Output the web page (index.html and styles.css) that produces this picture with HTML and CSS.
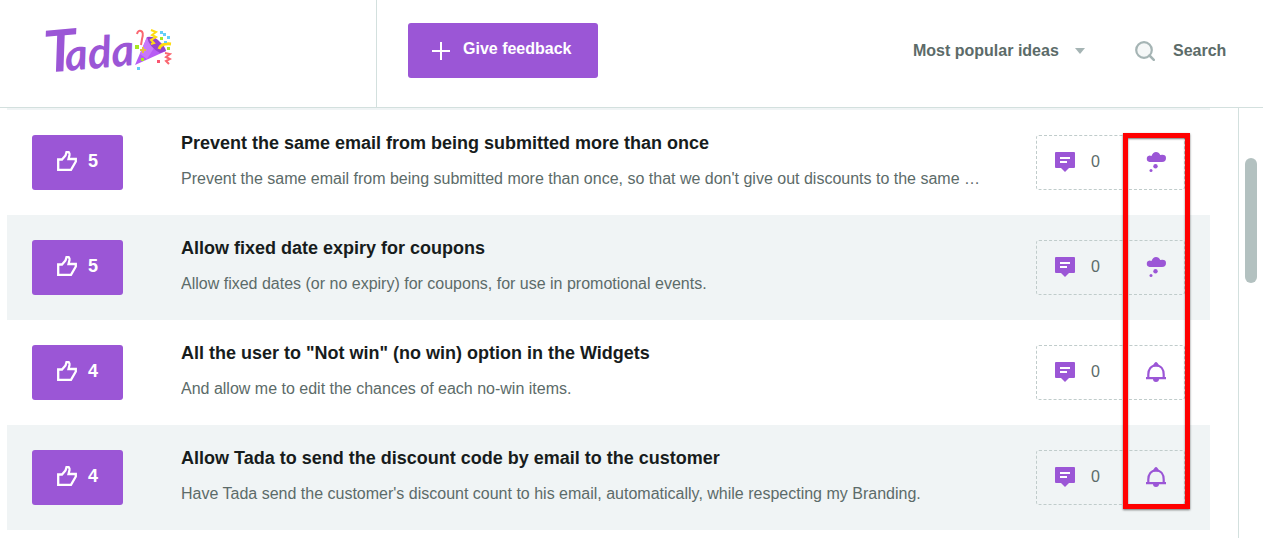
FILE: index.html
```html
<!DOCTYPE html>
<html lang="en">
  <head>
    <meta charset="UTF-8" />
    <meta name="viewport" content="width=device-width, initial-scale=1.0" />
    <title>Tada feedback</title>
    <link rel="stylesheet" href="styles.css">
  </head>
  <body>
    <!-- shared icons -->
    <svg class="sprite" aria-hidden="true">
      <symbol id="thumb" viewBox="0 0 20 20">
        <path d="M1.200 8.500H5L8.500 4.500 9.500 1.200h2.300q1 1 .7 2.800L11.500 8h7.300v2.500L14 18.800H1.200z" fill="none" stroke="currentColor" stroke-width="2.300" />
      </symbol>
      <symbol id="comment" viewBox="0 0 20 20">
        <path d="M1 0h18q1 0 1 1v14q0 1-1 1h-5l-4 4-4-4H1q-1 0-1-1V1q0-1 1-1z" fill="currentColor" />
        <path d="M5 6h10M5 10h7" stroke="#fff" stroke-width="2" />
      </symbol>
      <symbol id="cloud" viewBox="0 0 20 20">
        <path d="M3.500 10a3.300 3.300 0 0 1 0-6.500q1 0 2 .5Q7 0 10 0q3 0 4.200 3Q20 2 20 6q0 4-4 4z" fill="currentColor" />
        <circle cx="9.500" cy="14.300" r="2.200" fill="currentColor" />
        <circle cx="5" cy="18.500" r="1.500" fill="currentColor" />
      </symbol>
      <symbol id="bell" viewBox="0 0 20 20">
        <path d="M2.300 16v-3.500c0-5 2.500-9 7.700-9s7.700 4 7.700 9V16M0 16.200h20" fill="none" stroke="currentColor" stroke-width="2.200" />
        <path d="M6 4.500 8.500 1q1.500-2 3 0L14 4.500zM7 17h6q0 3-3 3t-3-3z" fill="currentColor" />
      </symbol>
    </svg>

    <header class="header">
      <a class="brand" href="#">
        <span class="brand-name">Tada</span>
        <svg class="popper" viewBox="0 0 38 42" aria-hidden="true">
          <path d="M13 8 1 36l31-14z" fill="#b75cf5" />
          <path d="m13 8-7 17 7 5 7-11z" fill="#c878fa" />
          <path d="M13 8q8-1 13 5 5 4 6 9l-6 2Q15 18 13 8z" fill="#9642ce" />
          <path d="M3 5q1-4 4-3t1 8l-1 6" fill="none" stroke="#fa6670" stroke-width="2" />
          <path d="m17 1 5 2-4 3 4 2-5 3 3 3-3 1" fill="none" stroke="#ffdc10" stroke-width="2" />
          <path d="M25 20q2-6 12-5" fill="none" stroke="#ffdc10" stroke-width="3" />
          <path d="m31 24 5 1-4 3 4 2-4 2 3 3" fill="none" stroke="#fa6670" stroke-width="2" />
          <path d="M1 16h4v4H1zM26 8h3v3h-3zM33 18h3v3h-3zM7 29h3v3H7z" fill="#a6e822" />
          <path d="M26 2h3v3h-3zM29 4h3v3h-3zM33 7h3v3h-3zM30 12h3v2h-3zM3 38h3v3H3z" fill="#62cef8" />
          <path d="M23 31h3v3h-3z" fill="#fa5570" />
          <path d="M9 18v6M6 21h6" stroke="#e4c040" stroke-width="2" />
        </svg>
      </a>
      <div class="toolbar">
        <button class="feedback" type="button">
          <svg width="18" height="18" viewBox="0 0 18 18" aria-hidden="true">
            <path d="M9 0v18M0 9h18" stroke="currentColor" stroke-width="2" />
          </svg>
          <span>Give feedback</span>
        </button>
        <div class="sort">
          <select class="sort-select" aria-label="Sort ideas">
            <option>Most popular ideas</option>
          </select>
          <svg width="10" height="6" viewBox="0 0 10 6" aria-hidden="true">
            <path d="M0 0h10L5 6z" fill="#a5b4b4" />
          </svg>
        </div>
        <div class="search">
          <label for="search" aria-label="Search">
            <svg width="20" height="20" viewBox="0 0 20 20" aria-hidden="true">
              <circle cx="9" cy="9" r="7.800" fill="#f5f7f7" stroke="#a5b4b4" stroke-width="2.200" />
              <path d="m14.500 14.500 4.300 4.300" stroke="#a5b4b4" stroke-width="2.500" stroke-linecap="round" />
            </svg>
          </label>
          <input id="search" class="search-input" type="text" placeholder="Search">
        </div>
      </div>
    </header>

    <main class="content">
      <div class="ideas">
        <article class="idea">
          <button class="vote" type="button"><svg class="icon"><use href="#thumb" /></svg>5</button>
          <div class="idea-text">
            <h2>Prevent the same email from being submitted more than once</h2>
            <p>Prevent the same email from being submitted more than once, so that we don't give out discounts to the same …</p>
          </div>
          <div class="stats">
            <a class="comments" href="#"><svg class="icon"><use href="#comment" /></svg>0</a>
            <span class="status"><svg class="icon"><use href="#cloud" /></svg></span>
          </div>
        </article>
        <article class="idea">
          <button class="vote" type="button"><svg class="icon"><use href="#thumb" /></svg>5</button>
          <div class="idea-text">
            <h2>Allow fixed date expiry for coupons</h2>
            <p>Allow fixed dates (or no expiry) for coupons, for use in promotional events.</p>
          </div>
          <div class="stats">
            <a class="comments" href="#"><svg class="icon"><use href="#comment" /></svg>0</a>
            <span class="status"><svg class="icon"><use href="#cloud" /></svg></span>
          </div>
        </article>
        <article class="idea">
          <button class="vote" type="button"><svg class="icon"><use href="#thumb" /></svg>4</button>
          <div class="idea-text">
            <h2>All the user to "Not win" (no win) option in the Widgets</h2>
            <p>And allow me to edit the chances of each no-win items.</p>
          </div>
          <div class="stats">
            <a class="comments" href="#"><svg class="icon"><use href="#comment" /></svg>0</a>
            <span class="status"><svg class="icon"><use href="#bell" /></svg></span>
          </div>
        </article>
        <article class="idea">
          <button class="vote" type="button"><svg class="icon"><use href="#thumb" /></svg>4</button>
          <div class="idea-text">
            <h2>Allow Tada to send the discount code by email to the customer</h2>
            <p>Have Tada send the customer's discount count to his email, automatically, while respecting my Branding.</p>
          </div>
          <div class="stats">
            <a class="comments" href="#"><svg class="icon"><use href="#comment" /></svg>0</a>
            <span class="status"><svg class="icon"><use href="#bell" /></svg></span>
          </div>
        </article>
        <div class="highlight"></div>
      </div>
      <div class="scroll-track"><div class="scroll-thumb"></div></div>
    </main>
  </body>
</html>
```
FILE: styles.css
```css
* {
  box-sizing: border-box;
}

body {
  margin: 0;
  min-height: 100vh;
  display: flex;
  flex-direction: column;
  background-color: #fff;
  color: #5c6b69;
  font-family: "Liberation Sans", Arial, sans-serif;
  font-size: 16px;
}

button,
select,
input {
  border: 0;
  font: inherit;
  font-weight: bold;
}

a {
  color: inherit;
  text-decoration: none;
}

svg {
  display: block;
  flex-shrink: 0;
}

.sprite {
  position: absolute;
  width: 0;
  height: 0;
}

.icon {
  width: 20px;
  height: 20px;
}

/* header */
.header {
  display: flex;
  height: 108px;
  border-bottom: 1px solid #d3e0de;
}

.brand {
  display: flex;
  align-items: center;
  width: 377px;
  padding: 0 0 8px 44px;
  border-right: 1px solid #d3e0de;
  color: #9b56d6;
}

.brand-name {
  font-family: Lato, sans-serif;
  font-size: 44px;
  font-style: italic;
  font-weight: bold;
  line-height: 60px;
  transform: rotate(-5deg);
}

.brand-name::first-letter {
  margin-right: -12px;
  font-size: 58px;
}

.popper {
  width: 38px;
  height: 42px;
}

.toolbar {
  flex: 1;
  display: flex;
  align-items: center;
  padding: 0 25px 6px 31px;
}

.feedback {
  display: flex;
  align-items: center;
  gap: 13px;
  height: 55px;
  padding: 0 26px 0 24px;
  border-radius: 3px;
  background-color: #9b56d6;
  color: #fff;
}

.feedback span {
  padding-bottom: 4px;
}

.sort {
  display: flex;
  align-items: center;
  gap: 16px;
  margin-left: auto;
}

.sort-select {
  appearance: none;
  padding: 0;
  background: none;
  color: #5c6b69;
}

.search {
  display: flex;
  align-items: center;
  gap: 18px;
  margin-left: 50px;
}

.search-input {
  width: 65px;
  padding: 0;
  color: #5c6b69;
}

.search-input::placeholder {
  color: #5c6b69;
  opacity: 1;
}

/* ideas list */
.content {
  flex: 1;
  display: flex;
  padding-left: 7px;
}

.ideas {
  position: relative;
  flex: 1;
  min-width: 0;
  align-self: flex-start;
  margin-right: 28px;
  border-top: 2px solid #f0f4f5;
}

.idea {
  display: flex;
  align-items: flex-start;
  height: 105px;
  padding: 25px;
}

.idea:nth-child(even) {
  background-color: #f0f4f5;
}

.vote {
  display: flex;
  align-items: center;
  justify-content: center;
  gap: 11px;
  width: 91px;
  height: 55px;
  padding-bottom: 4px;
  border-radius: 3px;
  background-color: #9b56d6;
  color: #fff;
  font-size: 18px;
}

.idea-text {
  flex: 1;
  min-width: 0;
  margin: 0 40px 0 58px;
}

.idea-text h2 {
  margin: 0 0 16px;
  color: #171c1c;
  font-size: 18px;
  line-height: 16px;
}

.idea-text p {
  margin: 0;
  line-height: 24px;
  overflow: hidden;
  text-overflow: ellipsis;
  white-space: nowrap;
}

.stats {
  display: flex;
  width: 149px;
  height: 55px;
  padding-bottom: 2px;
  border: 1px dashed #c0cccb;
  border-radius: 3px;
}

.comments {
  display: flex;
  align-items: center;
  gap: 16px;
  width: 90px;
  padding-left: 18px;
}

.comments .icon,
.status {
  color: #9b56d6;
}

.status {
  flex: 1;
  display: flex;
  align-items: center;
  justify-content: center;
}

/* red frame over the status column */
.highlight {
  position: absolute;
  top: 23px;
  right: 20px;
  bottom: 21px;
  width: 67px;
  border: 5px solid #f00;
  box-shadow: 0 1px 2px #0008, inset 0 1px 2px #0008;
}

.scroll-track {
  width: 25px;
  padding: 50px 6px;
  border-left: 1px solid #d3e0de;
}

.scroll-thumb {
  height: 125px;
  border-radius: 6px;
  background-color: #b3c1c0;
}
```
